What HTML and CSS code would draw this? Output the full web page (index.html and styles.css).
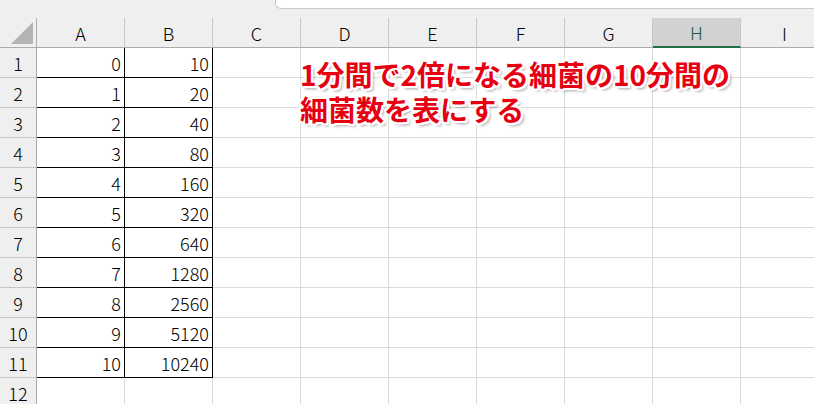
FILE: index.html
```html
<!DOCTYPE html>
<html lang="ja">
<head>
  <meta charset="UTF-8">
  <title>細菌数の表</title>
  <link rel="stylesheet" href="styles.css">
</head>
<body>

  <div class="sheet">
    <div class="topbar">
      <div class="formula"></div>
    </div>

    <div class="row head">
      <div class="corner">
        <svg width="22" height="22" viewBox="0 0 22 22"><polygon points="22,0 22,22 0,22" fill="#b4b4b4"/></svg>
      </div>
      <div class="col">A</div>
      <div class="col">B</div>
      <div class="col">C</div>
      <div class="col">D</div>
      <div class="col">E</div>
      <div class="col">F</div>
      <div class="col">G</div>
      <div class="col sel">H</div>
      <div class="col">I</div>
    </div>

    <div class="row"><div class="rh">1</div><div class="c bx">0</div><div class="c bx">10</div><div class="c"></div><div class="c"></div><div class="c"></div><div class="c"></div><div class="c"></div><div class="c"></div><div class="c"></div></div>
    <div class="row"><div class="rh">2</div><div class="c bx">1</div><div class="c bx">20</div><div class="c"></div><div class="c"></div><div class="c"></div><div class="c"></div><div class="c"></div><div class="c"></div><div class="c"></div></div>
    <div class="row"><div class="rh">3</div><div class="c bx">2</div><div class="c bx">40</div><div class="c"></div><div class="c"></div><div class="c"></div><div class="c"></div><div class="c"></div><div class="c"></div><div class="c"></div></div>
    <div class="row"><div class="rh">4</div><div class="c bx">3</div><div class="c bx">80</div><div class="c"></div><div class="c"></div><div class="c"></div><div class="c"></div><div class="c"></div><div class="c"></div><div class="c"></div></div>
    <div class="row"><div class="rh">5</div><div class="c bx">4</div><div class="c bx">160</div><div class="c"></div><div class="c"></div><div class="c"></div><div class="c"></div><div class="c"></div><div class="c"></div><div class="c"></div></div>
    <div class="row"><div class="rh">6</div><div class="c bx">5</div><div class="c bx">320</div><div class="c"></div><div class="c"></div><div class="c"></div><div class="c"></div><div class="c"></div><div class="c"></div><div class="c"></div></div>
    <div class="row"><div class="rh">7</div><div class="c bx">6</div><div class="c bx">640</div><div class="c"></div><div class="c"></div><div class="c"></div><div class="c"></div><div class="c"></div><div class="c"></div><div class="c"></div></div>
    <div class="row"><div class="rh">8</div><div class="c bx">7</div><div class="c bx">1280</div><div class="c"></div><div class="c"></div><div class="c"></div><div class="c"></div><div class="c"></div><div class="c"></div><div class="c"></div></div>
    <div class="row"><div class="rh">9</div><div class="c bx">8</div><div class="c bx">2560</div><div class="c"></div><div class="c"></div><div class="c"></div><div class="c"></div><div class="c"></div><div class="c"></div><div class="c"></div></div>
    <div class="row"><div class="rh">10</div><div class="c bx">9</div><div class="c bx">5120</div><div class="c"></div><div class="c"></div><div class="c"></div><div class="c"></div><div class="c"></div><div class="c"></div><div class="c"></div></div>
    <div class="row"><div class="rh">11</div><div class="c bx">10</div><div class="c bx">10240</div><div class="c"></div><div class="c"></div><div class="c"></div><div class="c"></div><div class="c"></div><div class="c"></div><div class="c"></div></div>
    <div class="row"><div class="rh">12</div><div class="c"></div><div class="c"></div><div class="c"></div><div class="c"></div><div class="c"></div><div class="c"></div><div class="c"></div><div class="c"></div><div class="c"></div></div>

    <p class="note">1分間で2倍になる細菌の10分間の<br>細菌数を表にする</p>
  </div>

</body>
</html>
```

FILE: styles.css
```css
body {
  margin: 0;
  background: #fff;
  font-family: "Noto Sans CJK JP", "Noto Sans", sans-serif;
  overflow: hidden;
}
.sheet {
  position: relative;
  width: 829px;
}
.topbar {
  height: 18px;
  background: #efefef;
  padding-left: 275px;
}
.formula {
  height: 8px;
  background: #fff;
  border-left: 1px solid #c9c9c9;
  border-bottom: 1px solid #c9c9c9;
  border-bottom-left-radius: 6px;
}
.row {
  display: flex;
  height: 30px;
}
.row > div {
  box-sizing: border-box;
  flex: none;
  font-size: 18px;
  font-weight: 300;
  color: #000;
}
.head > div {
  background: #efefef;
  border-bottom: 1px solid #ababab;
}
.corner {
  width: 37px;
  border-right: 1px solid #ababab;
  display: flex;
  align-items: flex-end;
  justify-content: flex-end;
  padding: 0 3px 3px 0;
}
.corner svg {
  display: block;
}
.col {
  width: 88px;
  border-right: 1px solid #c6c6c6;
  display: flex;
  align-items: center;
  justify-content: center;
}
.col.sel {
  background: #d2d2d2;
  color: #185c37;
  border-bottom: 2px solid #217346;
}
.rh {
  width: 37px;
  background: #efefef;
  border-right: 1px solid #ababab;
  border-bottom: 1px solid #c6c6c6;
  display: flex;
  align-items: center;
  justify-content: center;
}
.c {
  width: 88px;
  border-right: 1px solid #dadada;
  border-bottom: 1px solid #dadada;
  display: flex;
  align-items: center;
  justify-content: flex-end;
  padding-right: 3px;
}
.c.bx {
  border-right-color: #000;
  border-bottom-color: #000;
}
.note {
  position: absolute;
  left: 300px;
  top: 57px;
  margin: 0;
  font-size: 28px;
  line-height: 35px;
  font-weight: 700;
  color: #e60012;
  white-space: nowrap;
  text-shadow:
    2px 0 0 #fff, -2px 0 0 #fff, 0 2px 0 #fff, 0 -2px 0 #fff,
    2px 2px 0 #fff, -2px 2px 0 #fff, 2px -2px 0 #fff, -2px -2px 0 #fff,
    3px 3px 3px rgba(0, 0, 0, 0.35);
}
```
